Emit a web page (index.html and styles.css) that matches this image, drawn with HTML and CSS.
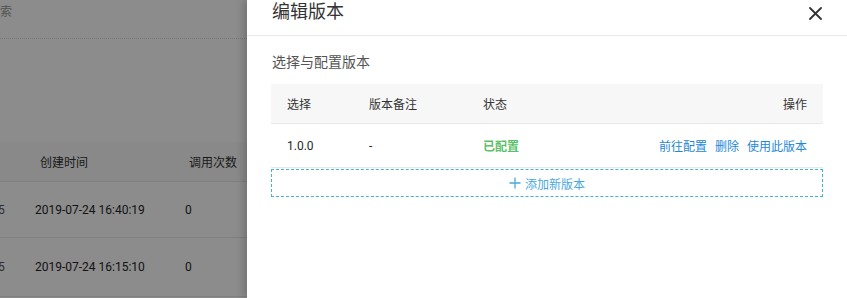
FILE: index.html
```html
<!DOCTYPE html>
<html lang="zh-CN">
<head>
    <meta charset="UTF-8">
    <meta name="viewport" content="width=device-width, initial-scale=1.0">
    <title>编辑版本</title>
    <link rel="stylesheet" href="styles.css">
</head>
<body>
    <div class="layout">
        <main class="page">
            <div class="page-top"><span class="search-tail">搜索</span></div>

            <div class="bg-table">
                <div class="bg-head">
                    <div class="bg-c1"></div>
                    <div class="bg-c2">创建时间</div>
                    <div class="bg-c3">调用次数</div>
                </div>
                <div class="bg-row">
                    <div class="bg-c1"><span class="cut">5</span></div>
                    <div class="bg-c2">2019-07-24 16:40:19</div>
                    <div class="bg-c3">0</div>
                </div>
                <div class="bg-row bg-row-tall">
                    <div class="bg-c1"><span class="cut">5</span></div>
                    <div class="bg-c2">2019-07-24 16:15:10</div>
                    <div class="bg-c3">0</div>
                </div>
            </div>

            <div class="mask"></div>
        </main>

        <aside class="drawer">
            <div class="drawer-header">
                <h2 class="drawer-title">编辑版本</h2>
                <button class="drawer-close" aria-label="关闭">
                    <svg width="13" height="13" viewBox="0 0 13 13">
                        <path d="M1 1 L12 12 M12 1 L1 12" stroke="#333" stroke-width="1.8" stroke-linecap="round" fill="none"/>
                    </svg>
                </button>
            </div>

            <div class="drawer-body">
                <div class="section-title">选择与配置版本</div>

                <div class="vtable">
                    <div class="vrow vhead">
                        <div>选择</div>
                        <div>版本备注</div>
                        <div>状态</div>
                        <div class="right">操作</div>
                    </div>
                    <div class="vrow">
                        <div>1.0.0</div>
                        <div>-</div>
                        <div class="status-ok">已配置</div>
                        <div class="right actions">
                            <a href="#">前往配置</a>
                            <a href="#">删除</a>
                            <a href="#">使用此版本</a>
                        </div>
                    </div>
                </div>

                <button class="add-version">
                    <svg width="12" height="12" viewBox="0 0 12 12">
                        <path d="M6 0.5 V11.5 M0.5 6 H11.5" stroke="#4aa8dc" stroke-width="1.3" fill="none"/>
                    </svg>
                    添加新版本
                </button>
            </div>
        </aside>
    </div>
</body>
</html>
```

FILE: styles.css
```css
* {
    margin: 0;
    padding: 0;
    box-sizing: border-box;
}

body {
    font-family: Roboto, "Noto Sans CJK SC", sans-serif;
    font-size: 12px;
    color: #262626;
    background: #fff;
    overflow: hidden;
}

.layout {
    display: flex;
    height: 100vh;
}

/* page behind the drawer */
.page {
    flex: 1;
    position: relative;
    overflow: hidden;
    background: #fff;
}

.page-top {
    height: 39px;
    border-bottom: 1px dotted #d9d9d9;
    padding-top: 4px;
    line-height: 16px;
    color: #999;
}

.search-tail {
    display: inline-block;
    margin-left: -12px;
}

.bg-table {
    margin-top: 103px;
}

.bg-head,
.bg-row {
    display: flex;
    align-items: center;
    border-bottom: 1px solid #e8e8e8;
}

.bg-head {
    height: 40px;
    background: #fafafa;
    color: #333;
}

.bg-row {
    height: 56px;
}

.bg-row-tall {
    height: 59px;
}

.bg-head .bg-c1 { width: 40px; }
.bg-head .bg-c2 { width: 149px; }
.bg-row .bg-c1 { width: 35px; }
.bg-row .bg-c2 { width: 150px; }

.cut {
    display: inline-block;
    margin-left: -2px;
    color: #555;
}

.mask {
    position: absolute;
    inset: 0;
    background: rgba(0, 0, 0, 0.45);
}

/* drawer */
.drawer {
    width: 600px;
    background: #fff;
    box-shadow: -3px 0 8px rgba(0, 0, 0, 0.2);
    position: relative;
}

.drawer-header {
    height: 36px;
    border-bottom: 1px solid #e8e8e8;
    display: flex;
    justify-content: space-between;
    align-items: flex-start;
    padding: 0 25px 0 25px;
}

.drawer-title {
    font-size: 18px;
    font-weight: 400;
    line-height: 24px;
    color: #333;
}

.drawer-close {
    border: none;
    background: none;
    margin-top: 7px;
    width: 13px;
    height: 13px;
    display: flex;
    cursor: pointer;
}

.drawer-body {
    padding: 16px 24px 0;
}

.section-title {
    font-size: 14px;
    line-height: 20px;
    color: #555;
    padding-left: 1px;
    margin-bottom: 12px;
}

.vrow {
    display: grid;
    grid-template-columns: 82px 114px 1fr auto;
    align-items: center;
    padding: 0 16px;
    height: 44px;
    border-bottom: 1px solid #e8e8e8;
}

.vhead {
    height: 40px;
    background: #f7f7f7;
    color: #333;
}

.right {
    text-align: right;
}

.status-ok {
    color: #5cbf6b;
    font-weight: 700;
}

.actions a {
    color: #1e88d6;
    text-decoration: none;
    margin-left: 5px;
}

.add-version {
    width: 100%;
    height: 28px;
    margin-top: 1px;
    border: 1px dashed #3db5d6;
    background: #fff;
    color: #4aa8dc;
    font-family: Roboto, "Noto Sans CJK SC", sans-serif;
    font-size: 12px;
    display: flex;
    align-items: center;
    justify-content: center;
    gap: 4px;
    cursor: pointer;
}
```
